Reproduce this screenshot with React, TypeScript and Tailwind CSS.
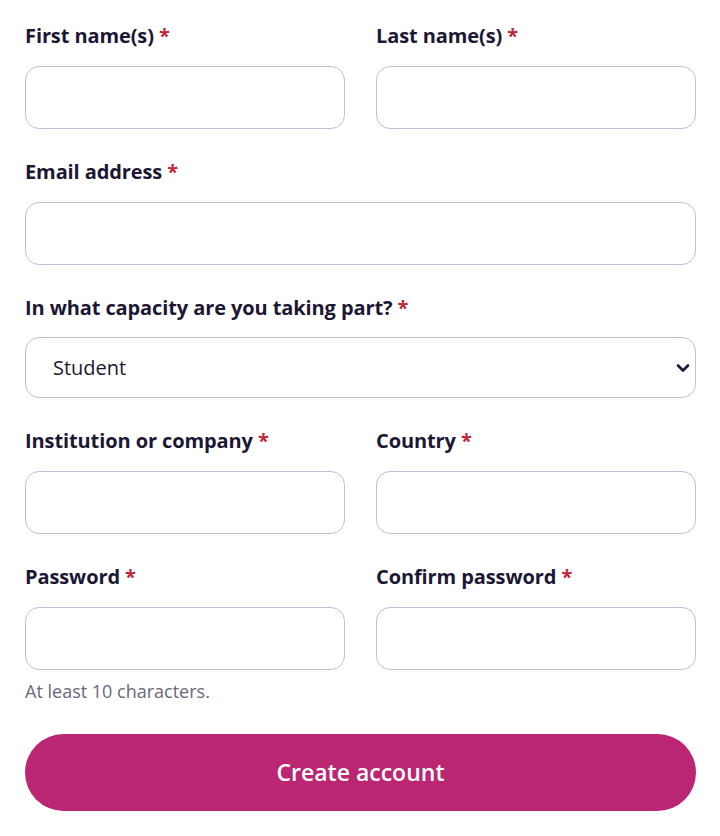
import React from "react";

const font = { fontFamily: '"Open Sans", "Noto Sans", sans-serif' };

function Label({ text, mb = "mb-[16px]" }: { text: string; mb?: string }) {
  return (
    <label className={`block text-[20px] leading-[28px] font-bold text-[#1b1734] tracking-[-0.1px] ${mb}`}>
      {text} <span className="text-[#c0283a]">*</span>
    </label>
  );
}

function Field({ label, type = "text" }: { label: string; type?: string }) {
  return (
    <div>
      <Label text={label} />
      <input
        type={type}
        className="block w-full h-[63px] rounded-[14px] border border-[#c0bdda] bg-white px-[27px] outline-none"
      />
    </div>
  );
}

export default function App() {
  return (
    <div className="bg-white min-h-[836px] pl-[25px] pr-[24px] pt-[22px] pb-[24px]" style={font}>
      <div className="grid grid-cols-2 gap-x-[31px] gap-y-[29px]">
        <Field label="First name(s)" />
        <Field label="Last name(s)" />
        <div className="col-span-2">
          <Field label="Email address" type="email" />
        </div>
        <div className="col-span-2">
          <Label text="In what capacity are you taking part?" mb="mb-[15px]" />
          <div className="relative">
            <select
              defaultValue="Student"
              className="block w-full h-[61px] appearance-none rounded-[14px] border border-[#c0bdda] bg-white pl-[27px] pr-[40px] text-[20px] text-[#1b1734] outline-none"
              style={font}
            >
              <option>Student</option>
              <option>Researcher</option>
              <option>Professional</option>
            </select>
            <svg
              className="pointer-events-none absolute right-[6px] top-1/2 -translate-y-1/2"
              width="14"
              height="10"
              viewBox="0 0 14 10"
            >
              <path d="M2 2.5 L7 7.5 L12 2.5" fill="none" stroke="#1b1734" strokeWidth="2.6" strokeLinecap="round" strokeLinejoin="round" />
            </svg>
          </div>
        </div>
        <Field label="Institution or company" />
        <Field label="Country" />
        <Field label="Password" type="password" />
        <Field label="Confirm password" type="password" />
      </div>
      <p className="mt-[9px] text-[18px] leading-[24px] text-[#6a687c]">At least 10 characters.</p>
      <button className="mt-[31px] block w-full h-[77px] rounded-full bg-[#bb2673] text-white text-[23px] font-semibold">
        Create account
      </button>
    </div>
  );
}
